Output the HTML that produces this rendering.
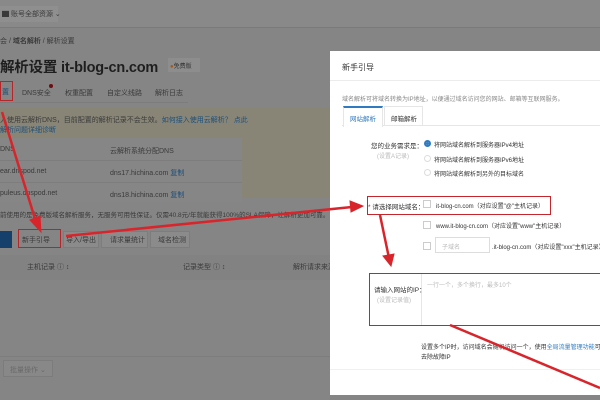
<!DOCTYPE html>
<html><head><meta charset="utf-8"><style>
*{margin:0;padding:0;box-sizing:border-box}
body{width:600px;height:400px;overflow:hidden;background:#858585;font-family:"Liberation Sans","Noto Sans CJK SC",sans-serif;color:#2a2a2a;position:relative;font-size:7px}
.a{position:absolute;white-space:nowrap}
.g{color:#3a3a3a}
.bl{color:#1d4f7a}
.m{color:#333}
.ml{color:#888}
.mb{color:#2f7ac0}
</style></head><body>
<div class="a" style="left:0;top:0;width:600px;height:27px;background:#898989"></div>
<div class="a" style="left:0;top:27px;width:600px;height:1px;background:#7a7a7a"></div>
<div class="a" style="left:0;top:6px;width:58px;height:16px;background:#8f8f8f"></div>
<div class="a g" style="left:2px;top:9px">▇ 账号全部资源 ⌄</div>
<div class="a g" style="left:0;top:36px">会 / <b>域名解析</b> / 解析设置</div>
<div class="a" style="left:0;top:56px;font-size:14.5px;font-weight:bold;color:#1e1e1e;letter-spacing:-0.2px">解析设置 it-blog-cn.com</div>
<div class="a" style="left:168px;top:58px;width:32px;height:14px;background:#8d8d8d;font-size:6px;padding:3px 2px;color:#333"><span style="color:#a0581c">●</span>免费版</div>
<div class="a" style="left:0;top:81px;width:188px;height:22px;border-bottom:1px solid #7c7c7c"></div>
<div class="a" style="left:0;top:81px;width:13px;height:20px;border:1px solid #b3262a;color:#1d4f7a;padding:5px 1px">置</div>
<div class="a g" style="left:22px;top:88px">DNS安全</div>
<div class="a" style="left:49px;top:84px;width:4px;height:4px;border-radius:2px;background:#6e0c10"></div>
<div class="a g" style="left:65px;top:88px">权重配置</div>
<div class="a g" style="left:107px;top:88px">自定义线路</div>
<div class="a g" style="left:155px;top:88px">解析日志</div>
<div class="a" style="left:0;top:108px;width:330px;height:90px;background:#888577"></div>
<div class="a g" style="left:0;top:115px">入使用云解析DNS，目前配置的解析记录不会生效。<span class="bl">如何接入使用云解析？ 点此</span></div>
<div class="a bl" style="left:0;top:125px">解析问题详细诊断</div>
<div class="a" style="left:0;top:138px;width:242px;height:64px;background:#868686"></div>
<div class="a g" style="left:0;top:146px">DNS</div><div class="a g" style="left:110px;top:146px">云解析系统分配DNS</div>
<div class="a" style="left:0;top:160px;width:242px;height:1px;background:#7d7d7d"></div>
<div class="a g" style="left:0;top:168px">ear.dnspod.net</div><div class="a g" style="left:110px;top:168px">dns17.hichina.com <span class="bl">复制</span></div>
<div class="a" style="left:0;top:182px;width:242px;height:1px;background:#7d7d7d"></div>
<div class="a g" style="left:0;top:190px">puleus.dnspod.net</div><div class="a g" style="left:110px;top:190px">dns18.hichina.com <span class="bl">复制</span></div>
<div class="a g" style="left:0;top:209px;font-size:6.5px">前使用的是免费版域名解析服务，无服务可用性保证。仅需40.8元/年就能获得100%的SLA保障，让解析更加可靠。 &gt;&gt; 立</div>
<div class="a" style="left:0;top:231px;width:12px;height:17px;background:#16406c"></div>
<div class="a" style="left:18px;top:229px;width:43px;height:19px;border:1px solid #b3262a"></div>
<div class="a g" style="left:22px;top:235px">新手引导</div>
<div class="a" style="left:63px;top:231px;width:36px;height:17px;background:#8b8b8b;border:1px solid #7d7d7d"></div><div class="a g" style="left:66px;top:235px">导入/导出</div>
<div class="a" style="left:101px;top:231px;width:47px;height:17px;background:#8b8b8b;border:1px solid #7d7d7d"></div><div class="a g" style="left:110px;top:235px">请求量统计</div>
<div class="a" style="left:150px;top:231px;width:40px;height:17px;background:#8b8b8b;border:1px solid #7d7d7d"></div><div class="a g" style="left:158px;top:235px">域名检测</div>
<div class="a" style="left:0;top:255px;width:330px;height:25px;background:#828282"></div>
<div class="a g" style="left:27px;top:262px">主机记录 ⓘ ↕</div>
<div class="a g" style="left:183px;top:262px">记录类型 ⓘ ↕</div>
<div class="a g" style="left:293px;top:262px">解析请求来源</div>
<div class="a" style="left:0;top:356px;width:330px;height:1px;background:#7d7d7d"></div>
<div class="a" style="left:3px;top:360px;width:50px;height:17px;border:1px solid #7c7c7c;background:#888"></div>
<div class="a" style="left:10px;top:365px;color:#6a6a6a">批量操作 ⌄</div>

<div class="a" style="left:330px;top:51px;width:270px;height:344px;background:#fff"></div>
<div class="a m" style="left:342px;top:62px;font-size:8px">新手引导</div>
<div class="a" style="left:330px;top:80px;width:270px;height:1px;background:#ececec"></div>
<div class="a ml" style="left:342px;top:94px;font-size:6px">域名解析可将域名转换为IP地址，以便通过域名访问您的网站、邮箱等互联网服务。</div>
<div class="a" style="left:342px;top:106px;width:258px;height:20px;border-bottom:1px solid #e6e6e6"></div>
<div class="a" style="left:343px;top:106px;width:40px;height:21px;background:#fff;border:1px solid #e6e6e6;border-top:2px solid #2f7ac0;border-bottom:none"></div>
<div class="a mb" style="left:350px;top:113px;font-size:6.5px">网站解析</div>
<div class="a" style="left:384px;top:106px;width:39px;height:20px;border:1px solid #e6e6e6;border-bottom:none"></div>
<div class="a m" style="left:391px;top:113px;font-size:6.5px">邮箱解析</div>
<div class="a m" style="left:371px;top:140px;font-size:6.5px">您的业务需求是：</div>
<div class="a ml" style="left:377px;top:151px;font-size:6px;color:#bbb">(设置A记录)</div>
<div class="a" style="left:424px;top:140px;width:7px;height:7px;border-radius:50%;border:2px solid #2f7ac0;background:#fff;box-shadow:inset 0 0 0 1px #fff"></div>
<div class="a" style="left:426px;top:142px;width:3px;height:3px;border-radius:50%;background:#2f7ac0"></div>
<div class="a" style="left:424px;top:155px;width:7px;height:7px;border-radius:50%;border:1px solid #ddd"></div>
<div class="a" style="left:424px;top:169px;width:7px;height:7px;border-radius:50%;border:1px solid #ddd"></div>
<div class="a m" style="left:434px;top:140px;font-size:6px">将网站域名解析到服务器IPv4地址</div>
<div class="a m" style="left:434px;top:155px;font-size:6px">将网站域名解析到服务器IPv6地址</div>
<div class="a m" style="left:434px;top:169px;font-size:6px">将网站域名解析到另外的目标域名</div>
<div class="a" style="left:367px;top:196px;width:184px;height:19px;border:1px solid #c4262e"></div>
<div class="a m" style="left:368px;top:201px;font-size:6.5px"><span style="color:#c4262e">*</span> 请选择网站域名：</div>
<div class="a" style="left:423px;top:200px;width:8px;height:8px;border:1px solid #ccc"></div>
<div class="a m" style="left:436px;top:201px;font-size:6px">it-blog-cn.com（对应设置"@"主机记录）</div>
<div class="a" style="left:423px;top:221px;width:8px;height:8px;border:1px solid #ccc"></div>
<div class="a m" style="left:436px;top:221px;font-size:6px">www.it-blog-cn.com（对应设置"www"主机记录）</div>
<div class="a" style="left:423px;top:242px;width:8px;height:8px;border:1px solid #ccc"></div>
<div class="a" style="left:435px;top:237px;width:55px;height:16px;border:1px solid #ddd"></div>
<div class="a" style="left:442px;top:242px;font-size:6px;color:#bbb">子域名</div>
<div class="a m" style="left:492px;top:242px;font-size:6px">.it-blog-cn.com（对应设置"xxx"主机记录）</div>
<div class="a" style="left:369px;top:273px;width:235px;height:53px;border:1px solid #c4262e"></div>
<div class="a" style="left:421px;top:274px;width:1px;height:51px;background:#e6e6e6"></div>
<div class="a m" style="left:374px;top:284px;font-size:6.5px">请输入网站的IP：</div>
<div class="a" style="left:377px;top:295px;font-size:6px;color:#bbb">(设置记录值)</div>
<div class="a" style="left:427px;top:280px;font-size:6px;color:#bbb">一行一个，多个换行，最多10个</div>
<div class="a m" style="left:421px;top:342px;font-size:6px">设置多个IP时，访问域名会随机访问一个，使用<span class="mb">全局流量管理功能</span>可</div>
<div class="a m" style="left:421px;top:352px;font-size:6px">去除故障IP</div>
<div class="a" style="left:330px;top:369px;width:270px;height:1px;background:#f0f0f0"></div>

<svg class="a" style="left:0;top:0" width="600" height="400">
<g stroke="#d8252b" stroke-width="2.5" fill="#d8252b">
<line x1="2" y1="112" x2="36" y2="222"/><polygon points="30,220 41,232 40,216" stroke-width="1"/>
<line x1="66" y1="236" x2="352" y2="207"/><polygon points="350,201 363,206 351,212" stroke-width="1"/>
<line x1="380" y1="215" x2="389" y2="258"/><polygon points="383,256 391,266 394,254" stroke-width="1"/>
<line x1="450" y1="325" x2="600" y2="388"/>
</g></svg>
</body></html>
